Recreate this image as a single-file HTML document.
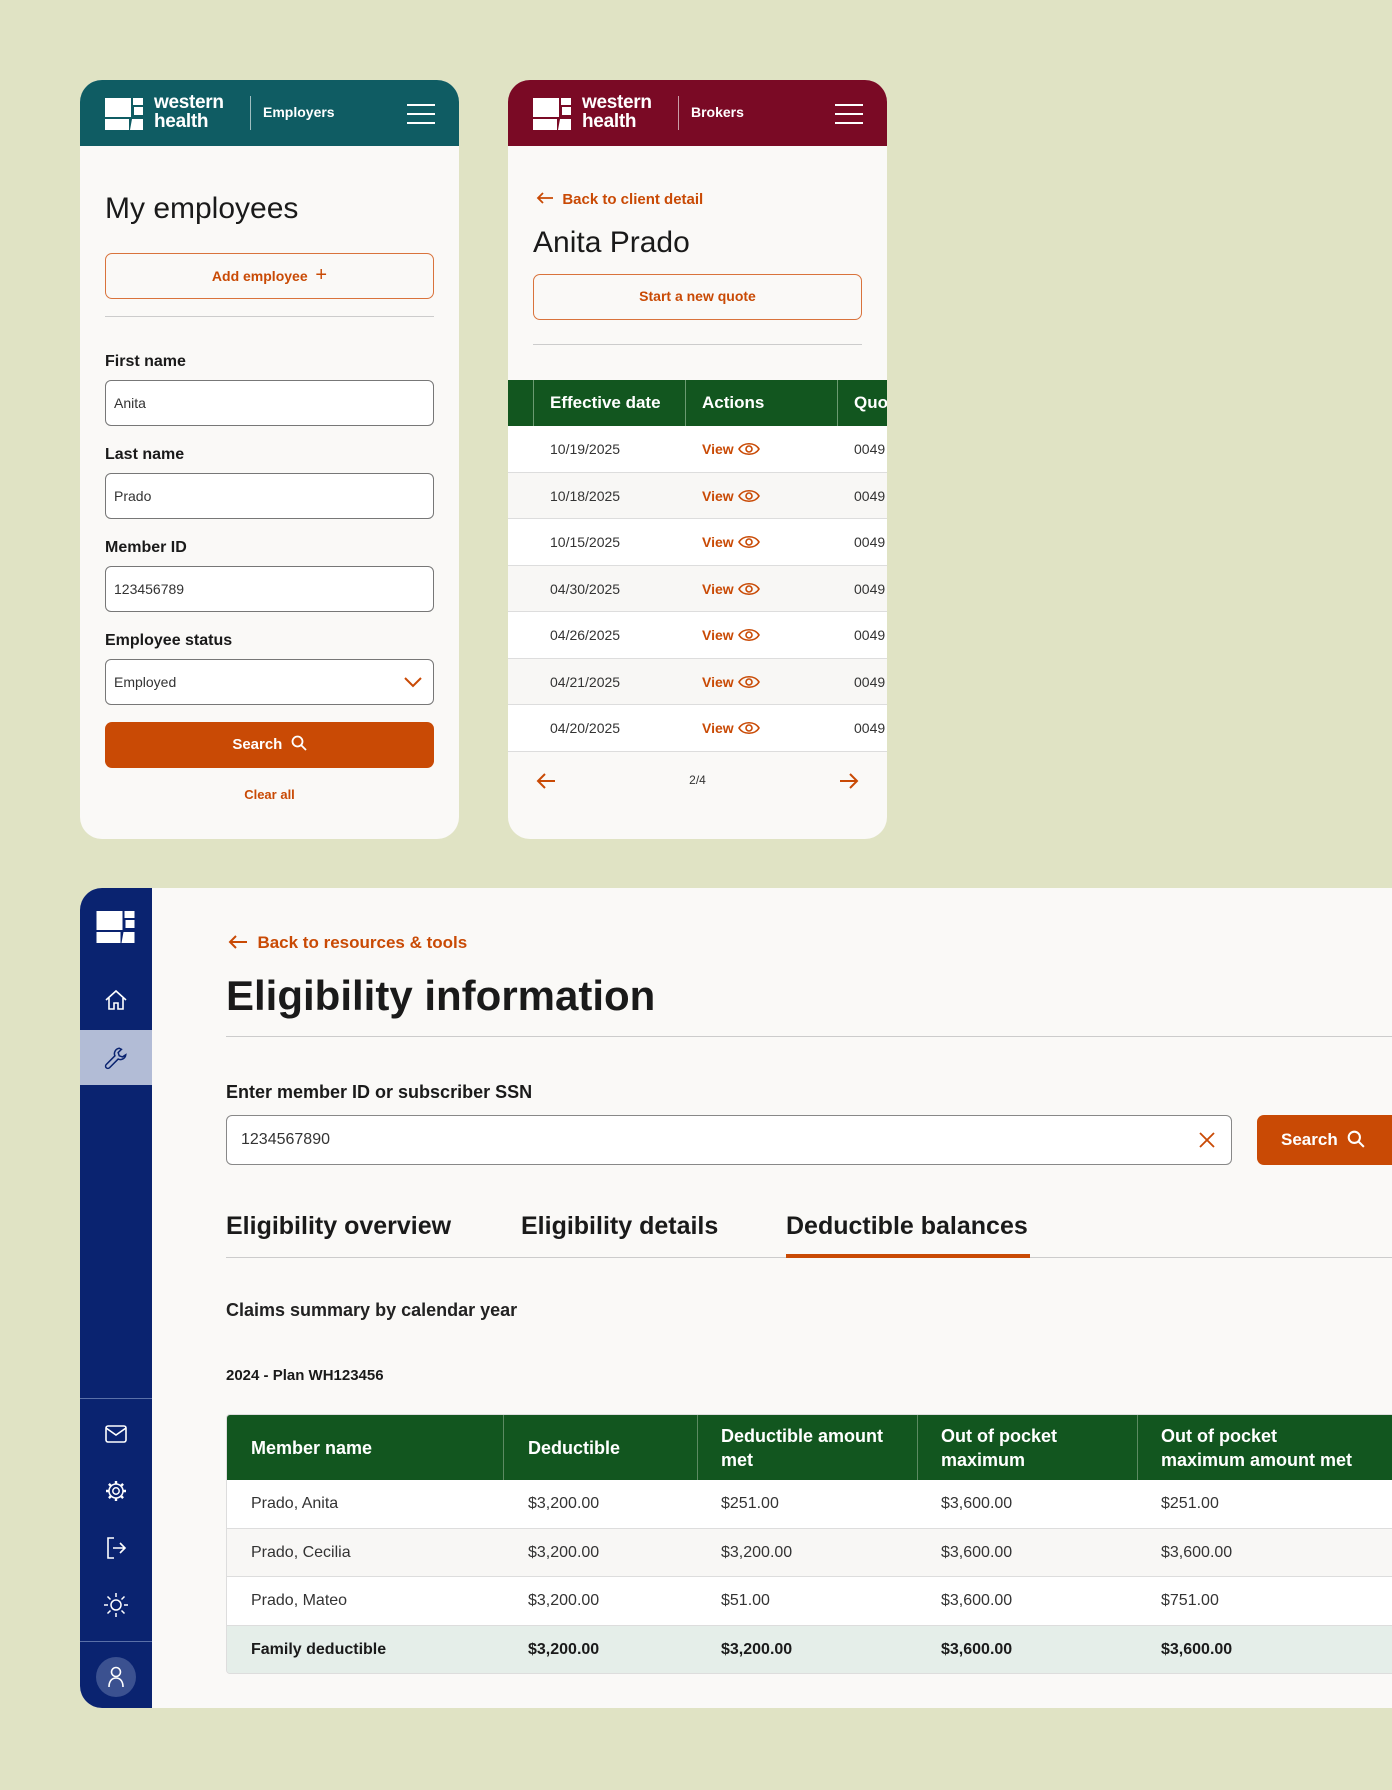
<!DOCTYPE html>
<html><head><meta charset="utf-8"><style>
*{box-sizing:border-box;margin:0;padding:0}
body{width:1392px;height:1790px;background:#e0e3c4;font-family:"Liberation Sans",sans-serif;position:relative;overflow:hidden;color:#1a1a1a}
.a{position:absolute}
.card{position:absolute;background:#faf9f7;border-radius:22px;overflow:hidden}
.hdr{position:absolute;left:0;top:0;right:0;height:66px}
.brand{position:absolute;left:74px;top:13px;color:#fff;font-weight:bold;font-size:19px;line-height:19px;letter-spacing:-0.3px}
.vd{position:absolute;left:170px;top:16px;width:1px;height:34px;background:rgba(255,255,255,.6)}
.sec{position:absolute;left:183px;top:24px;color:#fff;font-size:14px;font-weight:bold}
.ham{position:absolute;right:24px;top:24px;width:28px}
.ham i{display:block;height:2px;background:#fff;margin-bottom:7px}
.or{color:#c94a05}
.lbl{position:absolute;left:25px;font-weight:bold;font-size:16px}
.inp{position:absolute;left:25px;width:329px;height:46px;border:1px solid #777;border-radius:6px;background:#fff;font-size:14px;padding:14px 8px;color:#333}
.btno{position:absolute;border:1.5px solid #d9733c;border-radius:7px;color:#c94a05;font-weight:bold;font-size:14px;text-align:center}
.row{position:absolute;left:0;right:0;height:46.5px;border-bottom:1px solid #ddd;font-size:14px;color:#333}
.row span{position:absolute;top:15px}
</style></head><body>

<!-- Card 1 -->
<div class="card" style="left:80px;top:80px;width:379px;height:759px">
  <div class="hdr" style="background:#0f5c63">
    <svg class="a" style="left:25px;top:18px" width="40" height="33" viewBox="0 0 40 33"><path d="M0 0H26V19H0Z M0 21H24V32H0Z M28 0H38V7H28Z M29 9H38V17H29Z M27 21H38V32H25Z" fill="#fff"/></svg>
    <div class="brand">western<br>health</div>
    <div class="vd"></div><div class="sec">Employers</div>
    <div class="ham"><i></i><i></i><i></i></div>
  </div>
  <div class="a" style="left:25px;top:112px;font-size:30px">My employees</div>
  <div class="btno" style="left:25px;top:173px;width:329px;height:46px;line-height:43px">Add employee &nbsp;<span style="font-size:20px;font-weight:normal">+</span></div>
  <div class="a" style="left:25px;top:236px;width:329px;height:1px;background:#ccc"></div>
  <div class="lbl" style="top:273px">First name</div><div class="inp" style="top:300px">Anita</div>
  <div class="lbl" style="top:366px">Last name</div><div class="inp" style="top:393px">Prado</div>
  <div class="lbl" style="top:459px">Member ID</div><div class="inp" style="top:486px">123456789</div>
  <div class="lbl" style="top:552px">Employee status</div><div class="inp" style="top:579px">Employed
    <svg class="a" style="right:10px;top:15px" width="20" height="14" viewBox="0 0 20 14"><path d="M2 3L10 11L18 3" stroke="#c94a05" stroke-width="2" fill="none"/></svg></div>
  <div class="a" style="left:25px;top:642px;width:329px;height:46px;background:#c94a05;border-radius:7px;color:#fff;font-weight:bold;font-size:15px;text-align:center;line-height:46px">Search &nbsp;<svg width="16" height="16" viewBox="0 0 16 16" style="vertical-align:-2px"><circle cx="6.5" cy="6.5" r="5" stroke="#fff" stroke-width="1.8" fill="none"/><path d="M10 10L15 15" stroke="#fff" stroke-width="1.8"/></svg></div>
  <div class="a or" style="left:0;width:379px;top:707px;text-align:center;font-size:13px;font-weight:bold">Clear all</div>
</div>

<!-- Card 2 -->
<div class="card" style="left:508px;top:80px;width:379px;height:759px">
  <div class="hdr" style="background:#7a0a25">
    <svg class="a" style="left:25px;top:18px" width="40" height="33" viewBox="0 0 40 33"><path d="M0 0H26V19H0Z M0 21H24V32H0Z M28 0H38V7H28Z M29 9H38V17H29Z M27 21H38V32H25Z" fill="#fff"/></svg>
    <div class="brand">western<br>health</div>
    <div class="vd"></div><div class="sec">Brokers</div>
    <div class="ham"><i></i><i></i><i></i></div>
  </div>
  <div class="a or" style="left:28px;top:111px;font-size:15px;font-weight:bold"><svg width="18" height="14" viewBox="0 0 18 14" style="vertical-align:-1px"><path d="M17 7H2M7 2L2 7L7 12" stroke="#c94a05" stroke-width="1.8" fill="none"/></svg>&nbsp; Back to client detail</div>
  <div class="a" style="left:25px;top:146px;font-size:30px">Anita Prado</div>
  <div class="btno" style="left:25px;top:194px;width:329px;height:46px;line-height:43px">Start a new quote</div>
  <div class="a" style="left:25px;top:264px;width:329px;height:1px;background:#ccc"></div>
  <div class="a" style="left:0;top:300px;width:379px;height:46px;background:#12561f;color:#fff;font-weight:bold;font-size:17px">
    <div class="a" style="left:25px;top:0;width:1px;height:46px;background:#6a9a70"></div>
    <div class="a" style="left:177px;top:0;width:1px;height:46px;background:#6a9a70"></div>
    <div class="a" style="left:329px;top:0;width:1px;height:46px;background:#6a9a70"></div>
    <span class="a" style="left:42px;top:13px">Effective date</span>
    <span class="a" style="left:194px;top:13px">Actions</span>
    <span class="a" style="left:346px;top:13px">Quo</span>
  </div>
  <div class="a" style="left:0;top:346px;width:379px">
    <div class="row" style="top:0;background:#fff"><span style="left:42px">10/19/2025</span><span class="or" style="left:194px;font-weight:bold">View <svg width="22" height="14" viewBox="0 0 22 14" style="vertical-align:-2px"><path d="M1 7C5 0 17 0 21 7C17 14 5 14 1 7Z" stroke="#c94a05" stroke-width="1.6" fill="none"/><circle cx="11" cy="7" r="3" stroke="#c94a05" stroke-width="1.6" fill="none"/></svg></span><span style="left:346px">0049</span></div>
    <div class="row" style="top:46.5px;background:#f8f7f5"><span style="left:42px">10/18/2025</span><span class="or" style="left:194px;font-weight:bold">View <svg width="22" height="14" viewBox="0 0 22 14" style="vertical-align:-2px"><path d="M1 7C5 0 17 0 21 7C17 14 5 14 1 7Z" stroke="#c94a05" stroke-width="1.6" fill="none"/><circle cx="11" cy="7" r="3" stroke="#c94a05" stroke-width="1.6" fill="none"/></svg></span><span style="left:346px">0049</span></div>
    <div class="row" style="top:93px;background:#fff"><span style="left:42px">10/15/2025</span><span class="or" style="left:194px;font-weight:bold">View <svg width="22" height="14" viewBox="0 0 22 14" style="vertical-align:-2px"><path d="M1 7C5 0 17 0 21 7C17 14 5 14 1 7Z" stroke="#c94a05" stroke-width="1.6" fill="none"/><circle cx="11" cy="7" r="3" stroke="#c94a05" stroke-width="1.6" fill="none"/></svg></span><span style="left:346px">0049</span></div>
    <div class="row" style="top:139.5px;background:#f8f7f5"><span style="left:42px">04/30/2025</span><span class="or" style="left:194px;font-weight:bold">View <svg width="22" height="14" viewBox="0 0 22 14" style="vertical-align:-2px"><path d="M1 7C5 0 17 0 21 7C17 14 5 14 1 7Z" stroke="#c94a05" stroke-width="1.6" fill="none"/><circle cx="11" cy="7" r="3" stroke="#c94a05" stroke-width="1.6" fill="none"/></svg></span><span style="left:346px">0049</span></div>
    <div class="row" style="top:186px;background:#fff"><span style="left:42px">04/26/2025</span><span class="or" style="left:194px;font-weight:bold">View <svg width="22" height="14" viewBox="0 0 22 14" style="vertical-align:-2px"><path d="M1 7C5 0 17 0 21 7C17 14 5 14 1 7Z" stroke="#c94a05" stroke-width="1.6" fill="none"/><circle cx="11" cy="7" r="3" stroke="#c94a05" stroke-width="1.6" fill="none"/></svg></span><span style="left:346px">0049</span></div>
    <div class="row" style="top:232.5px;background:#f8f7f5"><span style="left:42px">04/21/2025</span><span class="or" style="left:194px;font-weight:bold">View <svg width="22" height="14" viewBox="0 0 22 14" style="vertical-align:-2px"><path d="M1 7C5 0 17 0 21 7C17 14 5 14 1 7Z" stroke="#c94a05" stroke-width="1.6" fill="none"/><circle cx="11" cy="7" r="3" stroke="#c94a05" stroke-width="1.6" fill="none"/></svg></span><span style="left:346px">0049</span></div>
    <div class="row" style="top:279px;background:#fff"><span style="left:42px">04/20/2025</span><span class="or" style="left:194px;font-weight:bold">View <svg width="22" height="14" viewBox="0 0 22 14" style="vertical-align:-2px"><path d="M1 7C5 0 17 0 21 7C17 14 5 14 1 7Z" stroke="#c94a05" stroke-width="1.6" fill="none"/><circle cx="11" cy="7" r="3" stroke="#c94a05" stroke-width="1.6" fill="none"/></svg></span><span style="left:346px">0049</span></div>
  </div>
  <svg class="a" style="left:28px;top:692px" width="20" height="18" viewBox="0 0 20 18"><path d="M19 9H2M9 2L2 9L9 16" stroke="#c94a05" stroke-width="2" fill="none"/></svg>
  <div class="a" style="left:0;width:379px;top:693px;text-align:center;font-size:12px;color:#333">2/4</div>
  <svg class="a" style="left:331px;top:692px" width="20" height="18" viewBox="0 0 20 18"><path d="M1 9H18M11 2L18 9L11 16" stroke="#c94a05" stroke-width="2" fill="none"/></svg>
</div>

<!-- Bottom card -->
<div class="card" style="left:80px;top:888px;width:1340px;height:820px;border-radius:22px 0 0 22px">
  <div class="a" style="left:0;top:0;width:72px;height:820px;background:#0a2370">
    <svg class="a" style="left:16px;top:23px" width="41" height="33" viewBox="0 0 40 33"><path d="M0 0H26V19H0Z M0 21H24V32H0Z M28 0H38V7H28Z M29 9H38V17H29Z M27 21H38V32H25Z" fill="#fff"/></svg>
    <svg class="a" style="left:24px;top:100px" width="24" height="24" viewBox="0 0 24 24"><path d="M2 12L12 3L22 12M5 10V21H10V15H14V21H19V10" stroke="#fff" stroke-width="1.6" fill="none"/></svg>
    <div class="a" style="left:0;top:142px;width:72px;height:55px;background:#b2bcd6"></div>
    <svg class="a" style="left:23px;top:157px" width="26" height="26" viewBox="0 0 24 24"><path d="M15 3a5 5 0 0 0-4 7L3 18a2 2 0 0 0 3 3l8-8a5 5 0 0 0 7-4l-3 2-3-1-1-3 3-3z" stroke="#0a2370" stroke-width="1.4" fill="none"/></svg>
    <div class="a" style="left:0;top:510px;width:72px;height:1px;background:#5a70a8"></div>
    <svg class="a" style="left:25px;top:537px" width="22" height="18" viewBox="0 0 22 18"><rect x="1" y="1" width="20" height="16" rx="2" stroke="#fff" stroke-width="1.6" fill="none"/><path d="M1 3L11 10L21 3" stroke="#fff" stroke-width="1.6" fill="none"/></svg>
    <svg class="a" style="left:24px;top:591px" width="24" height="24" viewBox="0 0 24 24"><circle cx="12" cy="12" r="3.2" stroke="#fff" stroke-width="1.5" fill="none"/><circle cx="12" cy="12" r="7" stroke="#fff" stroke-width="1.5" fill="none"/><path d="M12 2v3M12 19v3M2 12h3M19 12h3M4.9 4.9l2.1 2.1M17 17l2.1 2.1M4.9 19.1L7 17M17 7l2.1-2.1" stroke="#fff" stroke-width="2.4"/></svg>
    <svg class="a" style="left:25px;top:648px" width="22" height="24" viewBox="0 0 22 24"><path d="M9 2H3V22H9M8 12H20M15 7L20 12L15 17" stroke="#fff" stroke-width="1.6" fill="none"/></svg>
    <svg class="a" style="left:23px;top:704px" width="26" height="26" viewBox="0 0 26 26"><circle cx="13" cy="13" r="5" stroke="#fff" stroke-width="1.5" fill="none"/><path d="M13 1v4M13 21v4M1 13h4M21 13h4M4.5 4.5l3 3M18.5 18.5l3 3M4.5 21.5l3-3M18.5 7.5l3-3" stroke="#fff" stroke-width="1.5"/></svg>
    <div class="a" style="left:0;top:753px;width:72px;height:1px;background:#5a70a8"></div>
    <div class="a" style="left:16px;top:769px;width:40px;height:40px;border-radius:50%;background:#3b5190"></div>
    <svg class="a" style="left:27px;top:778px" width="18" height="22" viewBox="0 0 18 22"><circle cx="9" cy="6" r="4.5" stroke="#fff" stroke-width="1.6" fill="none"/><path d="M2 21C2 15 5 12 9 12C13 12 16 15 16 21" stroke="#fff" stroke-width="1.6" fill="none"/></svg>
  </div>

  <div class="a or" style="left:148px;top:45px;font-size:17px;font-weight:bold"><svg width="20" height="16" viewBox="0 0 20 16" style="vertical-align:-2px"><path d="M19 8H2M8 2L2 8L8 14" stroke="#c94a05" stroke-width="2" fill="none"/></svg>&nbsp;&nbsp;Back to resources &amp; tools</div>
  <div class="a" style="left:146px;top:84px;font-size:42px;font-weight:bold;color:#1a1a1a">Eligibility information</div>
  <div class="a" style="left:146px;top:148px;width:1200px;height:1px;background:#ccc"></div>
  <div class="a" style="left:146px;top:194px;font-size:18px;font-weight:bold">Enter member ID or subscriber SSN</div>
  <div class="a" style="left:146px;top:227px;width:1006px;height:50px;border:1px solid #888;border-radius:6px;background:#fff;font-size:16px;padding:15px 14px;color:#333">1234567890
    <svg class="a" style="right:16px;top:16px" width="16" height="16" viewBox="0 0 16 16"><path d="M1 1L15 15M15 1L1 15" stroke="#c94a05" stroke-width="1.8"/></svg></div>
  <div class="a" style="left:1177px;top:227px;width:200px;height:50px;background:#c94a05;border-radius:7px;color:#fff;font-weight:bold;font-size:17px;padding:15px 24px">Search &nbsp;<svg width="18" height="18" viewBox="0 0 16 16" style="vertical-align:-3px"><circle cx="6.5" cy="6.5" r="5" stroke="#fff" stroke-width="1.8" fill="none"/><path d="M10 10L15 15" stroke="#fff" stroke-width="1.8"/></svg></div>

  <div class="a" style="left:146px;top:324px;font-size:25px;font-weight:bold">Eligibility overview</div>
  <div class="a" style="left:441px;top:324px;font-size:25px;font-weight:bold">Eligibility details</div>
  <div class="a" style="left:706px;top:324px;font-size:25px;font-weight:bold">Deductible balances</div>
  <div class="a" style="left:146px;top:369px;width:1200px;height:1px;background:#ccc"></div>
  <div class="a" style="left:706px;top:366px;width:244px;height:4px;background:#c94a05"></div>

  <div class="a" style="left:146px;top:412px;font-size:18px;font-weight:bold;color:#222">Claims summary by calendar year</div>
  <div class="a" style="left:146px;top:479px;font-size:15px;font-weight:bold">2024 - Plan WH123456</div>

  <div class="a" style="left:146px;top:526px;width:1200px;height:260px;border:1px solid #ddd;border-radius:4px;overflow:hidden">
    <div class="a" style="left:0;top:0;width:1200px;height:65px;background:#12561f;color:#fff;font-size:18px;font-weight:bold;line-height:24px">
      <span class="a" style="left:24px;top:21px">Member name</span>
      <span class="a" style="left:301px;top:21px">Deductible</span>
      <span class="a" style="left:494px;top:9px">Deductible amount<br>met</span>
      <span class="a" style="left:714px;top:9px">Out of pocket<br>maximum</span>
      <span class="a" style="left:934px;top:9px">Out of pocket<br>maximum amount met</span>
      <div class="a" style="left:276px;top:0;width:1px;height:65px;background:#5c8a62"></div>
      <div class="a" style="left:470px;top:0;width:1px;height:65px;background:#5c8a62"></div>
      <div class="a" style="left:690px;top:0;width:1px;height:65px;background:#5c8a62"></div>
      <div class="a" style="left:910px;top:0;width:1px;height:65px;background:#5c8a62"></div>
    </div>
    <div class="row" style="top:65px;height:48.5px;background:#fff;font-size:16px"><span style="left:24px">Prado, Anita</span><span style="left:301px">$3,200.00</span><span style="left:494px">$251.00</span><span style="left:714px">$3,600.00</span><span style="left:934px">$251.00</span></div>
    <div class="row" style="top:113.5px;height:48.5px;background:#f8f7f5;font-size:16px"><span style="left:24px">Prado, Cecilia</span><span style="left:301px">$3,200.00</span><span style="left:494px">$3,200.00</span><span style="left:714px">$3,600.00</span><span style="left:934px">$3,600.00</span></div>
    <div class="row" style="top:162px;height:48.5px;background:#fff;font-size:16px"><span style="left:24px">Prado, Mateo</span><span style="left:301px">$3,200.00</span><span style="left:494px">$51.00</span><span style="left:714px">$3,600.00</span><span style="left:934px">$751.00</span></div>
    <div class="row" style="top:210.5px;height:48.5px;background:#e5eee9;font-size:16px;font-weight:bold;color:#1a1a1a"><span style="left:24px">Family deductible</span><span style="left:301px">$3,200.00</span><span style="left:494px">$3,200.00</span><span style="left:714px">$3,600.00</span><span style="left:934px">$3,600.00</span></div>
  </div>
</div>
</body></html>
